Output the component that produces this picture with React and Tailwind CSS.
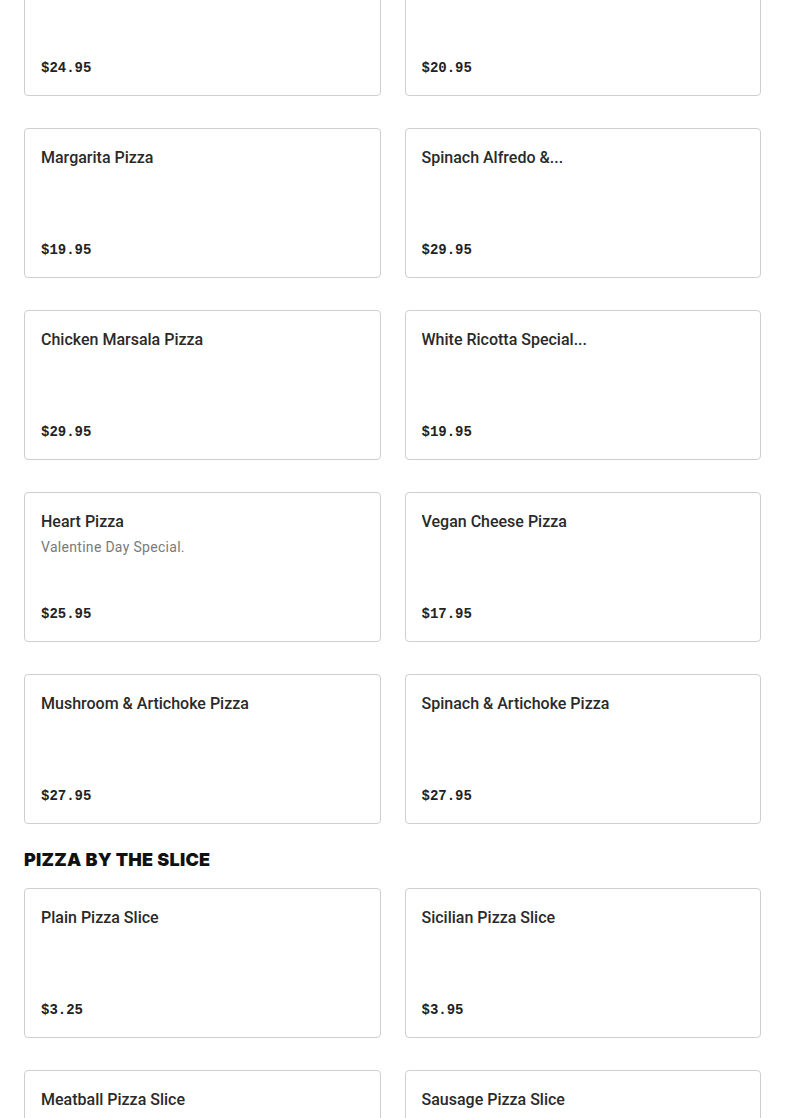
import React from 'react';

const pies = [
  { name: '', price: '$24.95' },
  { name: '', price: '$20.95' },
  { name: 'Margarita Pizza', price: '$19.95' },
  { name: 'Spinach Alfredo &...', price: '$29.95' },
  { name: 'Chicken Marsala Pizza', price: '$29.95' },
  { name: 'White Ricotta Special...', price: '$19.95' },
  { name: 'Heart Pizza', desc: 'Valentine Day Special.', price: '$25.95' },
  { name: 'Vegan Cheese Pizza', price: '$17.95' },
  { name: 'Mushroom & Artichoke Pizza', price: '$27.95' },
  { name: 'Spinach & Artichoke Pizza', price: '$27.95' },
];

const slices = [
  { name: 'Plain Pizza Slice', price: '$3.25' },
  { name: 'Sicilian Pizza Slice', price: '$3.95' },
  { name: 'Meatball Pizza Slice', price: '$3.95' },
  { name: 'Sausage Pizza Slice', price: '$3.95' },
];

function ItemCard({ item }) {
  return (
    <div className="h-[150px] flex flex-col justify-between border border-[#cfcfcf] rounded-[4px] bg-white px-4 pt-[17px] pb-[17px]">
      <div>
        <h3 className="text-[16px] leading-6 font-medium text-[#2a2a2a] font-['Roboto',sans-serif] truncate">
          {item.name}
        </h3>
        {item.desc && (
          <p className="mt-[3px] text-[14px] leading-5 tracking-[0.3px] text-[#7a7a7a] font-['Roboto',sans-serif]">
            {item.desc}
          </p>
        )}
      </div>
      <span className="text-[14px] leading-5 font-bold text-[#222] font-['Liberation_Mono',monospace]">
        {item.price}
      </span>
    </div>
  );
}

export default function App() {
  return (
    <div className="bg-white min-h-screen px-6 overflow-hidden">
      <div className="-mt-[54px] grid grid-cols-2 gap-x-6 gap-y-8">
        {pies.map((p, i) => (
          <ItemCard key={i} item={p} />
        ))}
      </div>

      <h2 className="mt-[24px] mb-[16px] text-[18px] leading-6 font-black uppercase tracking-[0.25px] text-[#111] font-['Inter',sans-serif]">
        Pizza by the slice
      </h2>

      <div className="grid grid-cols-2 gap-x-6 gap-y-8 pb-8">
        {slices.map((s, i) => (
          <ItemCard key={i} item={s} />
        ))}
      </div>
    </div>
  );
}
